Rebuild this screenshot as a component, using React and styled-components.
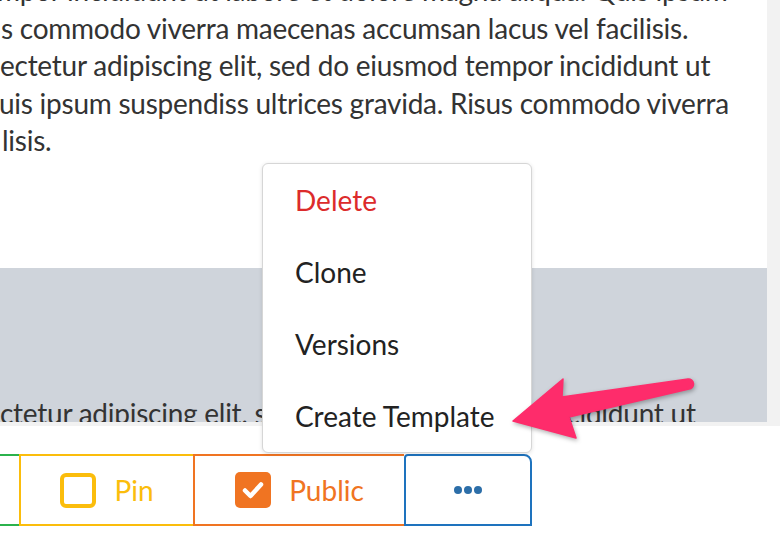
import React from 'react';
import styled, { createGlobalStyle } from 'styled-components';

const GlobalStyle = createGlobalStyle`
  html, body {
    margin: 0;
    padding: 0;
    background: #ffffff;
  }
  body {
    font-family: Lato, 'Open Sans', Arial, sans-serif;
  }
`;

const Page = styled.div`
  position: relative;
  width: 780px;
  height: 546px;
  overflow: hidden;
  background: #fff;
`;

const Viewer = styled.div`
  height: 426px;
  box-sizing: border-box;
  padding: 0 13px 4px 0;
  background: #f2f2f2;
`;

const Sheet = styled.div`
  height: 422px;
  display: flex;
  flex-direction: column;
  overflow: hidden;
  background: #fff;
`;

const Prose = styled.div`
  margin-top: -28px;
  font-size: 28px;
  line-height: 37.5px;
  letter-spacing: -0.25px;
  color: #333;
`;

const Line = styled.div`
  white-space: nowrap;
  margin-left: ${(p) => p.$shift || 0}px;
`;

const Band = styled.div`
  margin-top: auto;
  height: 154px;
  box-sizing: border-box;
  padding-top: 127px;
  background: #cfd4db;
  font-size: 28px;
  line-height: 37.5px;
  letter-spacing: -0.25px;
  color: #333;
  overflow: hidden;
`;

const Gap = styled.div`
  height: 28px;
`;

const Toolbar = styled.div`
  display: flex;
  height: 72px;
`;

const ToolButton = styled.button`
  display: flex;
  align-items: center;
  justify-content: center;
  gap: 18px;
  width: ${(p) => p.$w}px;
  height: 72px;
  box-sizing: border-box;
  margin: 0;
  padding: 0;
  background: #fff;
  border: 2px solid ${(p) => p.$color};
  border-right: ${(p) => (p.$last ? `2px solid ${p.$color}` : 'none')};
  border-radius: ${(p) => (p.$last ? '4px 8px 0 0' : '0')};
  color: ${(p) => p.$color};
  font-family: Lato, 'Open Sans', Arial, sans-serif;
  font-size: 28px;
  cursor: pointer;
  flex-shrink: 0;
`;

const OffLeft = styled(ToolButton)`
  margin-left: -81px;
`;

const EmptyBox = styled.span`
  width: 36px;
  height: 35px;
  box-sizing: border-box;
  border: 4px solid #fbbd0c;
  border-radius: 6px;
`;

const CheckedBox = styled.span`
  display: flex;
  align-items: center;
  justify-content: center;
  width: 36px;
  height: 36px;
  border-radius: 5px;
  background: #f07422;
`;

const Menu = styled.div`
  position: absolute;
  left: 262px;
  top: 163px;
  width: 270px;
  box-sizing: border-box;
  background: #fff;
  border: 1px solid #d6d6d6;
  border-radius: 6px;
  box-shadow: 0 1px 4px rgba(0, 0, 0, 0.12);
`;

const MenuItem = styled.div`
  height: 72px;
  line-height: 72px;
  padding-left: 32px;
  font-size: 28px;
  color: ${(p) => (p.$danger ? '#dc2b2b' : '#222')};
  white-space: nowrap;
`;

const Arrow = styled.svg`
  position: absolute;
  left: 500px;
  top: 365px;
  width: 200px;
  height: 85px;
  filter: drop-shadow(1px 2px 2px rgba(0, 0, 0, 0.3));
`;

const prose = [
  { text: 'mpor incididunt ut labore et dolore magna aliqua. Quis ipsum', shift: -3 },
  { text: 's commodo viverra maecenas accumsan lacus vel facilisis.', shift: 1 },
  { text: 'ectetur adipiscing elit, sed do eiusmod tempor incididunt ut', shift: 0 },
  { text: 'uis ipsum suspendiss ultrices gravida. Risus commodo viverra', shift: -1 },
  { text: 'lisis.', shift: 2 },
];

const menu = ['Delete', 'Clone', 'Versions', 'Create Template'];

export default function App() {
  return (
    <>
      <GlobalStyle />
      <Page>
        <Viewer>
          <Sheet>
            <Prose>
              {prose.map((l) => (
                <Line key={l.text} $shift={l.shift}>{l.text}</Line>
              ))}
            </Prose>
            <Band>
              <Line $shift={0}>ctetur adipiscing elit, sed do eiusmod tempor incididunt ut</Line>
            </Band>
          </Sheet>
        </Viewer>
        <Gap />
        <Toolbar>
          <OffLeft $w={100} $color="#2bb24c" />
          <ToolButton $w={174} $color="#fbbd0c">
            <EmptyBox />
            Pin
          </ToolButton>
          <ToolButton $w={211} $color="#f07422">
            <CheckedBox>
              <svg width="24" height="24" viewBox="0 0 24 24">
                <path d="M4 12.5 L9.5 18 L20 6.5" fill="none" stroke="#fff" strokeWidth="4.5" strokeLinecap="round" strokeLinejoin="round" />
              </svg>
            </CheckedBox>
            Public
          </ToolButton>
          <ToolButton $w={128} $color="#1e73be" $last>
            <svg width="30" height="10" viewBox="0 0 30 10">
              <circle cx="5" cy="5" r="4" fill="#2c6ea8" />
              <circle cx="15" cy="5" r="4" fill="#2c6ea8" />
              <circle cx="25" cy="5" r="4" fill="#2c6ea8" />
            </svg>
          </ToolButton>
        </Toolbar>

        <Menu>
          {menu.map((m, i) => (
            <MenuItem key={m} $danger={i === 0}>{m}</MenuItem>
          ))}
        </Menu>

        <Arrow viewBox="500 365 200 85">
          <path
            d="M513 421 L563 379 L562 397 L688 379 A5 5 0 0 1 689 389 L569 417 L576 438 Z"
            fill="#fe2c6b"
            stroke="#fe2c6b"
            strokeWidth="1.5"
            strokeLinejoin="round"
          />
        </Arrow>
      </Page>
    </>
  );
}
